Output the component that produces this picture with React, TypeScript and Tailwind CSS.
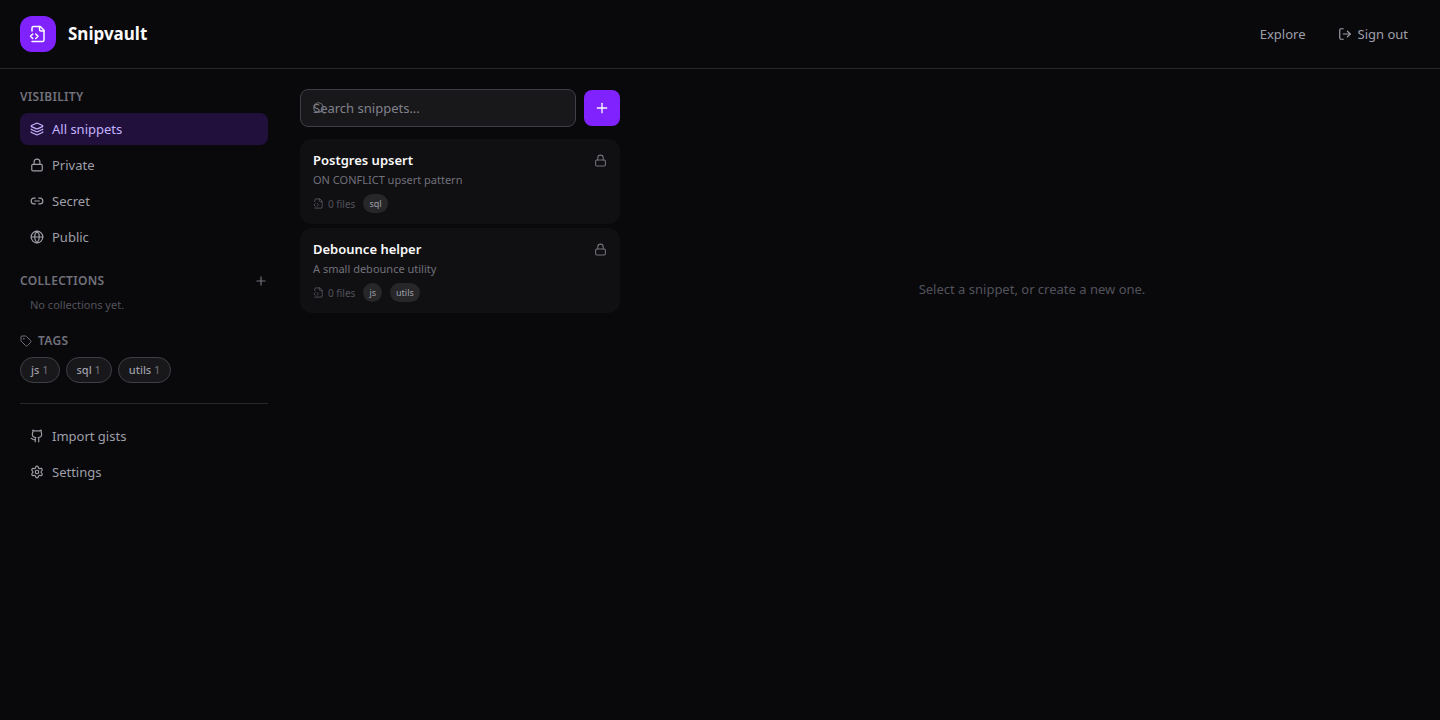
import type { ReactNode } from "react";
import {
  Github,
  Globe,
  Layers,
  Link2,
  Lock,
  LogOut,
  Plus,
  Search,
  Settings,
  Tag,
} from "lucide-react";

type Snippet = { title: string; description: string; files: number; tags: string[] };

const snippets: Snippet[] = [
  { title: "Postgres upsert", description: "ON CONFLICT upsert pattern", files: 0, tags: ["sql"] },
  { title: "Debounce helper", description: "A small debounce utility", files: 0, tags: ["js", "utils"] },
];

const tags = [
  { name: "js", count: 1 },
  { name: "sql", count: 1 },
  { name: "utils", count: 1 },
];

function FileCode({ size }: { size: number }) {
  return (
    <svg
      width={size}
      height={size}
      viewBox="0 0 24 24"
      fill="none"
      stroke="currentColor"
      strokeWidth="2"
      strokeLinecap="round"
      strokeLinejoin="round"
      aria-hidden="true"
    >
      <path d="M4 22h14a2 2 0 0 0 2-2V7l-5-5H6a2 2 0 0 0-2 2v4" />
      <path d="M14 2v4a2 2 0 0 0 2 2h4" />
      <path d="m5 12-3 3 3 3" />
      <path d="m9 18 3-3-3-3" />
    </svg>
  );
}

function NavItem({ icon, label, active = false }: { icon: ReactNode; label: string; active?: boolean }) {
  return (
    <button
      type="button"
      className={
        active
          ? "flex h-8 w-full items-center gap-2 rounded-lg bg-[#210f3c] px-2.5 text-[13px] leading-5 text-[#c4b4ff]"
          : "flex h-8 w-full items-center gap-2 rounded-lg px-2.5 text-[13px] leading-5 text-zinc-400"
      }
    >
      {icon}
      {label}
    </button>
  );
}

function SectionTitle({ children }: { children: ReactNode }) {
  return (
    <h2 className="flex items-center gap-1.5 text-[12px] leading-4 font-semibold tracking-wide text-zinc-500 uppercase">
      {children}
    </h2>
  );
}

function SnippetCard({ snippet }: { snippet: Snippet }) {
  return (
    <button
      type="button"
      className="block w-full rounded-xl border border-transparent bg-[#101012] px-3 py-2.5 text-left"
    >
      <span className="flex items-center justify-between gap-2">
        <span className="text-[13px] leading-5 font-semibold text-zinc-50">{snippet.title}</span>
        <Lock size={13} className="text-zinc-500" />
      </span>
      <span className="mt-0.5 block text-[11px] leading-4 text-zinc-500">{snippet.description}</span>
      <span className="mt-1.5 flex items-center gap-2">
        <span className="flex items-center gap-1 text-[10px] leading-4 text-zinc-600">
          <FileCode size={11} />
          {snippet.files} files
        </span>
        {snippet.tags.map((tag) => (
          <span key={tag} className="rounded-full bg-zinc-800 px-1.5 py-0.5 text-[9px] leading-[15px] text-zinc-400">
            {tag}
          </span>
        ))}
      </span>
    </button>
  );
}

export default function App() {
  return (
    <div className="min-h-screen bg-zinc-950 font-['Noto_Sans','Open_Sans',sans-serif] text-zinc-50">
      <header className="flex items-center justify-between border-b border-zinc-800 px-5 py-4">
        <div className="flex items-center gap-3">
          <span className="flex size-9 items-center justify-center rounded-xl bg-[#7f22fe]">
            <FileCode size={18} />
          </span>
          <h1 className="text-[17px] leading-7 font-bold">Snipvault</h1>
        </div>
        <nav className="flex items-center gap-2 text-[13px] leading-5 text-zinc-400">
          <a href="#explore" className="px-3 py-1.5">Explore</a>
          <button type="button" className="flex items-center gap-1.5 px-3 py-1.5">
            <LogOut size={14} />
            Sign out
          </button>
        </nav>
      </header>

      <div className="flex items-start p-5">
        <aside className="mr-8 flex w-62 shrink-0 flex-col gap-5">
          <section>
            <SectionTitle>Visibility</SectionTitle>
            <div className="mt-2 flex flex-col gap-1">
              <NavItem active icon={<Layers size={14} />} label="All snippets" />
              <NavItem icon={<Lock size={14} />} label="Private" />
              <NavItem icon={<Link2 size={14} />} label="Secret" />
              <NavItem icon={<Globe size={14} />} label="Public" />
            </div>
          </section>
          <section>
            <div className="flex items-center justify-between">
              <SectionTitle>Collections</SectionTitle>
              <button type="button" aria-label="New collection" className="text-zinc-500">
                <Plus size={14} />
              </button>
            </div>
            <p className="mt-2 px-2.5 text-[11px] leading-4 text-zinc-600">No collections yet.</p>
          </section>
          <section>
            <SectionTitle>
              <Tag size={12} />
              Tags
            </SectionTitle>
            <div className="mt-2 flex flex-wrap gap-1.5">
              {tags.map((tag) => (
                <button
                  key={tag.name}
                  type="button"
                  className="rounded-full border border-zinc-700 bg-zinc-900 px-2.5 py-1 text-[11px] leading-4 font-medium text-zinc-400"
                >
                  {tag.name} <span className="font-normal text-zinc-500">{tag.count}</span>
                </button>
              ))}
            </div>
          </section>
          <section className="flex flex-col gap-1 border-t border-zinc-800 pt-4">
            <NavItem icon={<Github size={14} />} label="Import gists" />
            <NavItem icon={<Settings size={14} />} label="Settings" />
          </section>
        </aside>

        <section className="mr-6 w-80 shrink-0">
          <div className="flex items-center gap-2">
            <div className="relative flex-1">
              <input
                type="search"
                aria-label="Search snippets"
                placeholder="Search snippets..."
                className="h-[38px] w-full rounded-lg border border-zinc-700 bg-zinc-900 px-3 text-[13px] text-zinc-50 outline-none placeholder:text-[#81818a]"
              />
              <Search size={14} className="pointer-events-none absolute top-3 left-3 text-zinc-500" />
            </div>
            <button
              type="button"
              aria-label="New snippet"
              className="flex size-9 items-center justify-center rounded-lg bg-[#7f22fe]"
            >
              <Plus size={16} />
            </button>
          </div>
          <div className="mt-3 flex flex-col gap-1">
            {snippets.map((snippet) => (
              <SnippetCard key={snippet.title} snippet={snippet} />
            ))}
          </div>
        </section>

        <main className="flex min-h-100 min-w-0 flex-1 items-center justify-center">
          <p className="text-[13px] leading-5 text-zinc-600">Select a snippet, or create a new one.</p>
        </main>
      </div>
    </div>
  );
}
